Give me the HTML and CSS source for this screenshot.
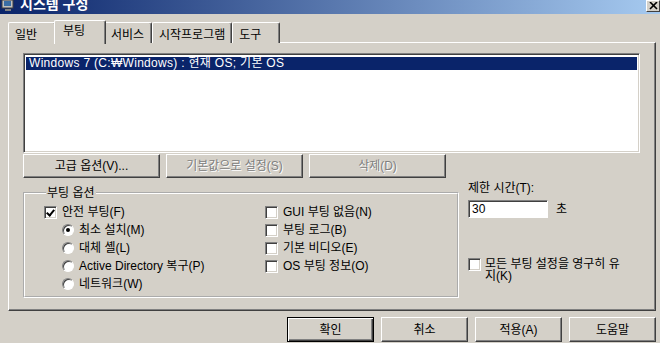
FILE: index.html
```html
<!DOCTYPE html>
<html lang="ko">
<head>
    <meta charset="UTF-8">
    <title>시스템 구성</title>
    <link rel="stylesheet" href="styles.css">
</head>
<body>
    <div class="titlebar">
        <svg class="app-icon" width="14" height="11" viewBox="0 0 14 11">
            <rect x="1" y="0" width="11" height="8" fill="#c0c0c0" stroke="#404040" stroke-width="1"/>
            <rect x="3" y="1" width="7" height="5" fill="#3a6ea5"/>
            <rect x="4" y="9" width="6" height="2" fill="#808080"/>
        </svg>
        <span class="title">시스템 구성</span>
        <span class="close">
            <svg width="9" height="8" viewBox="0 0 9 8">
                <path d="M1 0 L8 7 M8 0 L1 7" stroke="#000" stroke-width="1.6"/>
            </svg>
        </span>
    </div>

    <div class="tabs">
        <div class="tab">일반</div>
        <div class="tab active">부팅</div>
        <div class="tab">서비스</div>
        <div class="tab">시작프로그램</div>
        <div class="tab">도구</div>
    </div>

    <div class="panel">
        <div class="listbox">
            <div class="item selected">Windows 7 (C:₩Windows) : 현재 OS; 기본 OS</div>
        </div>
        <div class="list-buttons">
            <button class="btn">고급 옵션(V)...</button>
            <button class="btn" disabled>기본값으로 설정(S)</button>
            <button class="btn" disabled>삭제(D)</button>
        </div>

        <div class="lower">
            <fieldset class="group">
                <legend>부팅 옵션</legend>
                <div class="opts">
                    <div class="col">
                        <div class="row"><span class="check on"></span>안전 부팅(F)</div>
                        <div class="row sub"><span class="radio on"></span>최소 설치(M)</div>
                        <div class="row sub"><span class="radio"></span>대체 셸(L)</div>
                        <div class="row sub"><span class="radio"></span>Active Directory 복구(P)</div>
                        <div class="row sub"><span class="radio"></span>네트워크(W)</div>
                    </div>
                    <div class="col right">
                        <div class="row"><span class="check"></span>GUI 부팅 없음(N)</div>
                        <div class="row"><span class="check"></span>부팅 로그(B)</div>
                        <div class="row"><span class="check"></span>기본 비디오(E)</div>
                        <div class="row"><span class="check"></span>OS 부팅 정보(O)</div>
                    </div>
                </div>
            </fieldset>

            <div class="side">
                <div class="side-label">제한 시간(T):</div>
                <div class="timeout">
                    <span class="field">30</span>
                    <span>초</span>
                </div>
                <div class="keep">
                    <span class="check"></span>
                    <span class="keep-text">모든 부팅 설정을 영구히 유지(K)</span>
                </div>
            </div>
        </div>
    </div>

    <div class="dialog-buttons">
        <button class="btn wide default">확인</button>
        <button class="btn wide">취소</button>
        <button class="btn wide">적용(A)</button>
        <button class="btn wide">도움말</button>
    </div>
</body>
</html>
```

FILE: styles.css
```css
body {
    margin: 0;
    background: #d4d0c8;
    font-family: "Liberation Sans", "Noto Sans CJK KR", sans-serif;
    font-size: 12px;
    line-height: 14px;
    color: #000;
    width: 660px;
    height: 343px;
    overflow: hidden;
}

/* title bar */
.titlebar {
    height: 14px;
    display: flex;
    align-items: flex-start;
    background: linear-gradient(to right, #0a246a, #a6caf0);
    overflow: hidden;
}
.app-icon {
    margin: 0 5px 0 1px;
}
.title {
    color: #fff;
    font-family: "Noto Sans CJK KR", sans-serif;
    font-weight: bold;
    font-size: 14px;
    line-height: 16px;
    margin-top: -5px;
}
.close {
    margin-left: auto;
    width: 14px;
    height: 12px;
    box-sizing: border-box;
    background: #d4d0c8;
    border: 1px solid;
    border-color: #fff #404040 #404040 #fff;
    display: flex;
    align-items: center;
    justify-content: center;
}

/* tabs */
.tabs {
    display: flex;
    margin-top: 6px;
    padding-left: 8px;
    height: 23px;
    position: relative;
    z-index: 1;
}
.tab {
    min-width: 48px;
    box-sizing: border-box;
    height: 21px;
    margin-top: 2px;
    padding: 5px 6px 0;
    border: 1px solid;
    border-bottom: none;
    border-color: #fff #404040 #fff #fff;
    box-shadow: inset -1px 0 #808080;
    border-radius: 2px 2px 0 0;
    background: #d4d0c8;
}
.tab.active {
    margin: 0 -2px;
    height: 24px;
    padding: 3px 8px 0;
    min-width: 52px;
    position: relative;
    z-index: 2;
}

.panel {
    margin: -1px 4px 0 8px;
    height: 269px;
    box-sizing: border-box;
    border: 1px solid;
    border-color: #fff #404040 #404040 #fff;
    box-shadow: inset -1px -1px #808080;
    padding: 10px 15px 0 14px;
}

.listbox {
    height: 100px;
    box-sizing: border-box;
    background: #fff;
    border: 1px solid;
    border-color: #808080 #fff #fff #808080;
    box-shadow: inset 1px 1px #404040, inset -1px -1px #d4d0c8;
    padding: 3px 2px;
}
.item {
    height: 13px;
    line-height: 13px;
    padding-left: 3px;
    letter-spacing: 0.3px;
}
.item.selected {
    background: #0a246a;
    color: #fff;
}

.btn {
    font: inherit;
    color: #000;
    background: #d4d0c8;
    border: 1px solid;
    border-color: #fff #404040 #404040 #fff;
    box-shadow: inset -1px -1px #808080;
    padding: 0;
    height: 24px;
    width: 137px;
}
.btn:disabled {
    color: #808080;
    text-shadow: 1px 1px #fff;
}
.list-buttons {
    display: flex;
    gap: 6px;
    margin-top: 1px;
}

.lower {
    display: flex;
}
.group {
    margin: 8px 0 0;
    width: 436px;
    box-sizing: border-box;
    border: 2px groove #fff;
    padding: 3px 0 3px 19px;
}
.group legend {
    padding: 0 1px;
    margin-left: 2px;
    line-height: 14px;
}
.opts {
    display: flex;
}
.col {
    width: 221px;
}
.col.right {
    width: auto;
}
.row {
    height: 18px;
    display: flex;
    align-items: center;
    gap: 5px;
}
.row.sub {
    margin-left: 18px;
}

.check {
    width: 13px;
    height: 13px;
    box-sizing: border-box;
    background: #fff;
    border: 1px solid;
    border-color: #808080 #fff #fff #808080;
    box-shadow: inset 1px 1px #404040, inset -1px -1px #d4d0c8;
    flex: none;
    position: relative;
}
.check.on::after {
    content: "";
    position: absolute;
    left: 3px;
    top: 1px;
    width: 3px;
    height: 6px;
    border: solid #000;
    border-width: 0 2px 2px 0;
    transform: rotate(40deg);
}
.radio {
    width: 12px;
    height: 12px;
    box-sizing: border-box;
    border-radius: 50%;
    background: #fff;
    border: 1px solid;
    border-color: #808080 #fff #fff #808080;
    box-shadow: inset 1px 1px #404040;
    flex: none;
    position: relative;
}
.radio.on::after {
    content: "";
    position: absolute;
    left: 3px;
    top: 3px;
    width: 4px;
    height: 4px;
    border-radius: 50%;
    background: #000;
}

.side {
    margin-left: 9px;
    padding-top: 3px;
    width: 171px;
}
.timeout {
    display: flex;
    align-items: center;
    gap: 8px;
    margin-top: 5px;
}
.field {
    width: 80px;
    height: 18px;
    box-sizing: border-box;
    background: #fff;
    border: 1px solid;
    border-color: #808080 #fff #fff #808080;
    box-shadow: inset 1px 1px #404040;
    padding: 1px 3px;
}
.keep {
    display: flex;
    align-items: flex-start;
    gap: 4px;
    margin-top: 39px;
}
.keep .check {
    margin-top: 1px;
}
.keep-text {
    width: 140px;
    word-break: break-all;
    line-height: 12px;
    margin-top: 1px;
}

/* bottom buttons */
.dialog-buttons {
    display: flex;
    justify-content: flex-end;
    gap: 7px;
    margin: 6px 4px 0 0;
}
.btn.wide {
    width: 87px;
    height: 25px;
}
.btn.default {
    border: 1px solid #000;
    box-shadow: inset 1px 1px #fff, inset -1px -1px #404040, inset -2px -2px #808080;
}
```
